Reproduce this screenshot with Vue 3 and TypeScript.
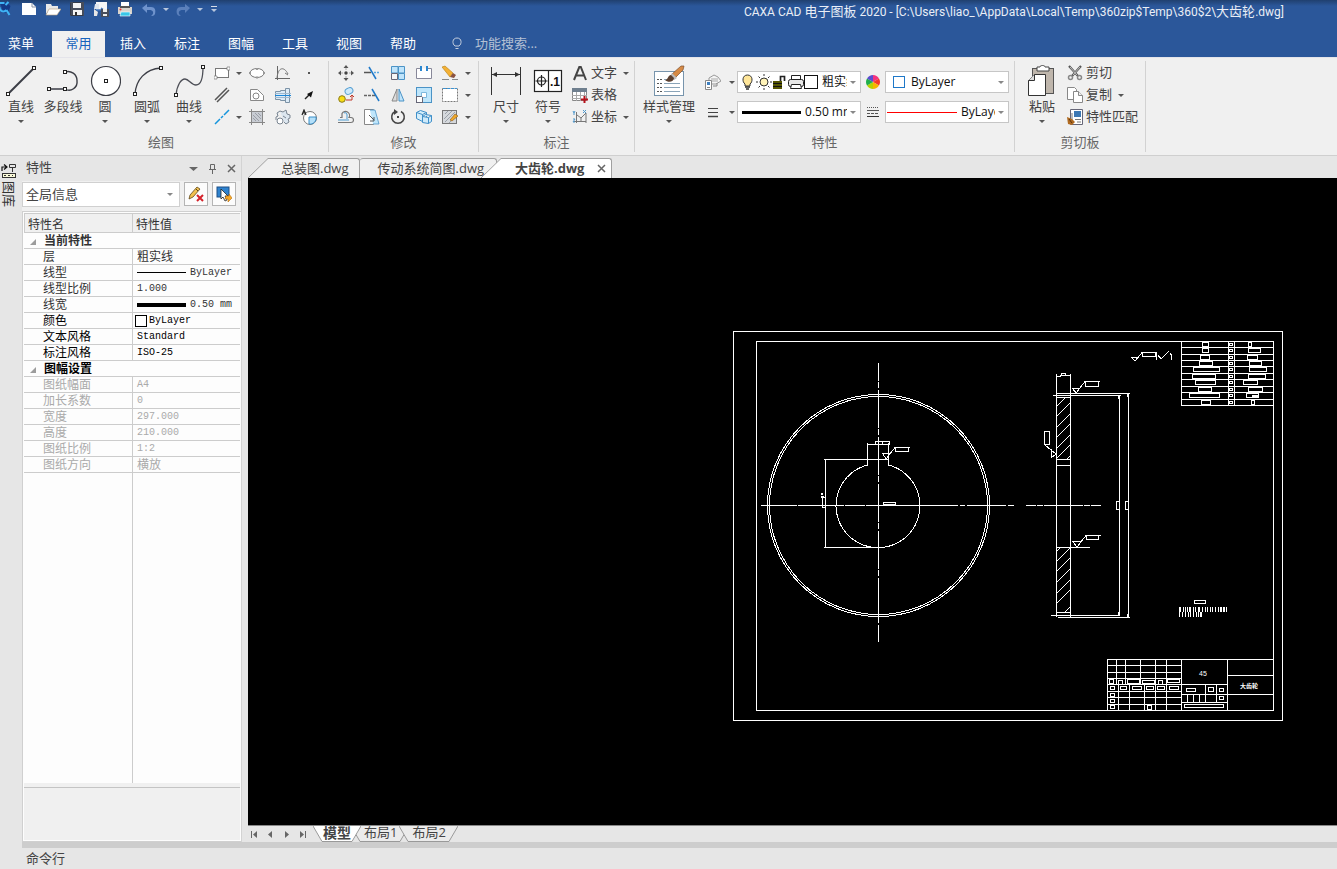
<script setup lang="ts">
import { ref } from 'vue'

type Tool = { icon: string; label: string; arrow?: boolean }

const quickTools: Tool[] = [
  { icon: 'new', label: '新建' },
  { icon: 'open', label: '打开' },
  { icon: 'save', label: '保存' },
  { icon: 'saveAs', label: '另存为' },
  { icon: 'print', label: '打印' },
  { icon: 'undo', label: '撤销', arrow: true },
  { icon: 'redo', label: '恢复', arrow: true },
]

const ribbonTabs = ['常用', '插入', '标注', '图幅', '工具', '视图', '帮助']
const activeTab = ref('常用')

const drawLarge: Tool[] = [
  { icon: 'line', label: '直线', arrow: true },
  { icon: 'polyline', label: '多段线' },
  { icon: 'circle', label: '圆', arrow: true },
  { icon: 'arc', label: '圆弧', arrow: true },
  { icon: 'curve', label: '曲线', arrow: true },
]

const drawSmall: Tool[][] = [
  [
    { icon: 'rect', label: '矩形', arrow: true },
    { icon: 'ellipse', label: '椭圆' },
    { icon: 'graph', label: '公式曲线' },
    { icon: 'dot', label: '点' },
  ],
  [
    { icon: 'parallel', label: '平行线' },
    { icon: 'hole', label: '孔' },
    { icon: 'shaft', label: '轴' },
    { icon: 'pointer', label: '箭头' },
  ],
  [
    { icon: 'centerline', label: '中心线', arrow: true },
    { icon: 'hatch', label: '剖面线' },
    { icon: 'gear', label: '齿形' },
    { icon: 'detail', label: '局部放大' },
  ],
]

const modifySmall: Tool[][] = [
  [
    { icon: 'move', label: '平移' },
    { icon: 'trim', label: '裁剪' },
    { icon: 'array', label: '阵列' },
    { icon: 'break', label: '打断' },
    { icon: 'erase', label: '删除', arrow: true },
  ],
  [
    { icon: 'copyMove', label: '平移复制' },
    { icon: 'extend', label: '延伸' },
    { icon: 'mirror', label: '镜像' },
    { icon: 'scale', label: '缩放' },
    { icon: 'select', label: '拉伸', arrow: true },
  ],
  [
    { icon: 'offset', label: '等距线' },
    { icon: 'chamfer', label: '过渡' },
    { icon: 'rotate', label: '旋转' },
    { icon: 'block', label: '分解' },
    { icon: 'editHatch', label: '编辑', arrow: true },
  ],
]

const noteLarge: Tool[] = [
  { icon: 'dimension', label: '尺寸', arrow: true },
  { icon: 'symbol', label: '符号', arrow: true },
]
const noteRows: Tool[] = [
  { icon: 'text', label: '文字', arrow: true },
  { icon: 'table', label: '表格' },
  { icon: 'coord', label: '坐标', arrow: true },
]
const clipRows: Tool[] = [
  { icon: 'cut', label: '剪切' },
  { icon: 'copy', label: '复制', arrow: true },
  { icon: 'match', label: '特性匹配' },
]

type Prop = { name: string; value: string; line?: 'thin' | 'thick'; swatch?: boolean; cjk?: boolean; tone?: 'strong' | 'muted' }
const currentProps: Prop[] = [
  { name: '层', value: '粗实线', cjk: true },
  { name: '线型', value: 'ByLayer', line: 'thin' },
  { name: '线型比例', value: '1.000' },
  { name: '线宽', value: '0.50 mm', line: 'thick' },
  { name: '颜色', value: 'ByLayer', swatch: true, tone: 'strong' },
  { name: '文本风格', value: 'Standard', tone: 'strong' },
  { name: '标注风格', value: 'ISO-25', tone: 'strong' },
]
const sheetProps: Prop[] = [
  { name: '图纸幅面', value: 'A4', tone: 'muted' },
  { name: '加长系数', value: '0', tone: 'muted' },
  { name: '宽度', value: '297.000', tone: 'muted' },
  { name: '高度', value: '210.000', tone: 'muted' },
  { name: '图纸比例', value: '1:2', tone: 'muted' },
  { name: '图纸方向', value: '横放', cjk: true, tone: 'muted' },
]

const layouts = ['模型', '布局1', '布局2']
const activeLayout = ref('模型')

const sq = (x: number, y: number) =>
  `<rect x="${x - 1.5}" y="${y - 1.5}" width="3" height="3" fill="#fff" stroke="#222"/>`

const icons: Record<string, string> = {
  new: '<path d="M1 2h10l4 4v8H1z" fill="#fff"/><path d="M11 2v4h4" fill="none" stroke="#8a93a5"/>',
  open: '<path d="M1 13V3h5l1 2h6v3H5z" fill="#e9e9e9"/><path d="M4 8h12l-4 6H1z" fill="#fff" stroke="#b9a07a" stroke-width=".6"/>',
  save: '<path d="M1.500 1.500h13v13h-13z" fill="#f4f4f4" stroke="#353b48"/><path d="M2 1v13h2V9h9v5h2V1h-3v6H4V1z" fill="#474d5b"/><path d="M6 11h2v4H6z" fill="#333"/>',
  saveAs: '<path d="M3 1h11v8H3z" fill="#f6f6f6"/><path d="M2 3l4 0v5H1z" fill="#dfe6ef"/><path d="M1 8l4 3-1 4H1z" fill="#e6e6e6"/><path d="M3 9h7M8 7l3 2-3 3" stroke="#3f74bd" fill="none" stroke-width="1.400"/><path d="M8 8h8v8H8z" fill="#474d5b"/><path d="M10 8h4v3h-4zM10 13h4v2h-4z" fill="#eee"/>',
  print: '<path d="M4 1h8v5H4z" fill="#fff"/><path d="M1 6h14v7H1z" fill="#d9d4cc"/><path d="M3 5h10v2H3z" fill="#555"/><path d="M4 11h9v4H3z" fill="#38c6e8" stroke="#fff" stroke-width=".6"/><circle cx="3.500" cy="8.500" r="1" fill="#e33"/>',
  undo: '<path d="M1 7l5-4v3h4c4 0 5 3 4 7-1 2-3 2-4 2 3-2 3-5-.5-6H6v3z" fill="#6f93cc"/>',
  redo: '<path d="M15 7l-5-4v3H6C2 6 1 9 2 13c1 2 3 2 4 2-3-2-3-5 .5-6H10v3z" fill="#5b80bb"/>',

  line: `<path d="M3 29L29 3" stroke="#3b3d45" stroke-width="2"/>${sq(3, 29)}${sq(29, 3)}`,
  polyline: `<path d="M2 24h16a8 8.500 0 0 0 12-8.500A9 9 0 0 0 18 7" fill="none" stroke="#3b3d45" stroke-width="1.400"/>${sq(2, 24)}${sq(18, 24)}${sq(18, 7)}`,
  circle: `<circle cx="17" cy="16" r="14.500" fill="#fff" stroke="#3b3d45" stroke-width="1.200"/>${sq(17, 16)}`,
  arc: `<path d="M4 29C5 15 14 4 30 3" fill="none" stroke="#3b3d45" stroke-width="1.300"/>${sq(4, 29)}${sq(30, 3)}`,
  curve: `<path d="M3 30C4 20 8 14 12 14s6 6 11 6c6 0 7-10 7-18" fill="none" stroke="#4c4e56" stroke-width="1.300"/>${sq(3, 30)}${sq(30, 2)}`,

  rect: '<rect x="1.500" y="3.500" width="13" height="9" fill="#fff" stroke="#777"/><path d="M0 11h3v3H0zM13 2h3v3h-3z" fill="#fff" stroke="#777" stroke-width=".7"/>',
  ellipse: '<ellipse cx="8" cy="8" rx="7" ry="4.500" fill="#fff" stroke="#777"/><path d="M7 3h2v2H7zM0 7h2v2H0zM14 7h2v2h-2zM7 11.500h2v2H7z" fill="#999"/>',
  graph: '<path d="M2.500 1v14M0 13.500h15" stroke="#666" fill="none"/><path d="M2 13C3 2 9 1 13 9M13 10l-3-2" stroke="#777" fill="none"/>',
  dot: '<path d="M7 7h2v2H7z" fill="#555"/>',
  parallel: '<path d="M1 13L13 1M3 15L15 3" stroke="#555" stroke-width="1.500"/>',
  hole: '<path d="M1.500 2.500h7l6 6v5h-13z" fill="#fff" stroke="#888"/><circle cx="7" cy="9" r="3" fill="#fff" stroke="#888"/>',
  shaft: '<path d="M.5 4.500h5v-1h5v10h-5v-1h-5z" fill="#dcebf7" stroke="#7d93a6"/><path d="M10.500 1.500h4v14h-4z" fill="#dcebf7" stroke="#7d93a6"/><path d="M0 6.500h16M0 10.500h16" stroke="#9fb9cf"/><path d="M0 8.500h16" stroke="#1b86d8"/>',
  pointer: '<path d="M4 12l4-4" stroke="#222" stroke-width="1.500"/><path d="M12 4L6 7l4 3.500z" fill="#111"/>',
  centerline: '<path d="M1 15L6 10M7 9l2-2M10 6l5-5" stroke="#1595dd" stroke-width="1.500"/>',
  hatch: '<rect x="2.500" y="2.500" width="11" height="11" fill="#c8ccd3" stroke="#777"/><path d="M2.500 0v16M0 2.500h16M13.500 0v16M0 13.500h16" stroke="#888"/><path d="M4 6l6 6M4 9l3 3M6 4l6 6M9 4l3 3" stroke="#9a9ea6"/>',
  gear: '<path d="M5 2l3 1 3-2 1 4 3 1v3l-2 1 1 3-3 2-2-2M1 8l2-1-1-3 3-2M1 8v3" fill="#dce6ef" stroke="#7a8591"/><circle cx="5" cy="12" r="3" fill="#fff" stroke="#7a8591"/><path d="M8 7l3 2" stroke="#7a8591"/>',
  detail: '<circle cx="9" cy="9" r="6.500" fill="#fff" stroke="#777"/><path d="M8 8h7a6 6 0 0 1-7 7z" fill="#b4e0fa" stroke="#3c8fc6"/><path d="M1 6l2-5 2 5M2 4h3" stroke="#222" fill="none" stroke-width="1.200"/>',

  move: '<path d="M8 0l2.500 3h-5zM8 16l2.500-3h-5zM0 8l3-2.500v5zM16 8l-3-2.500v5z" fill="#555"/><circle cx="8" cy="8" r="1.700" fill="#444"/><path d="M8 3v2M8 11v2M3 8h2M11 8h2" stroke="#aaa"/>',
  trim: '<path d="M0 7.500h7" stroke="#555" stroke-width="1.500"/><path d="M5 2l7 12" stroke="#1f79c9" stroke-width="1.500"/><path d="M10 7.500h6" stroke="#5aa7e0" stroke-width="1.500" stroke-dasharray="2 1"/>',
  array: '<path d="M1.500 1.500h6.500v6.500h-6.500zM8.500 1.500h6v6.500h-6zM8.500 8.500h6v6h-6z" fill="#bfe4fb" stroke="#4b93c6"/><path d="M1.500 8.500h6v6h-6z" fill="#f6f6f6" stroke="#667"/>',
  break: '<path d="M5 3.500H.5v10h15v-10H11" fill="#fff" stroke="#889"/><path d="M4 1h2v5H4zM10 1h2v5h-2z" fill="#2b86cf"/>',
  erase: '<path d="M0 2l3-1 8 7-3 4z" fill="#f4b134" stroke="#b67d12" stroke-width=".6"/><path d="M8 12l3-4 3 2-2 3z" fill="#8a5240"/><path d="M0 14.500h7M10 14.500h6" stroke="#888"/>',
  copyMove: '<rect x="7" y="1" width="8" height="6" rx="3" transform="rotate(-25 11 4)" fill="#cde9fb" stroke="#5aa2d4"/><circle cx="4" cy="12" r="3.300" fill="#f7dd14" stroke="#8a7b19"/><path d="M8 13h6v-4M12 10l2-2 2 2" stroke="#c0392b" fill="none"/>',
  extend: '<path d="M0 8.500h3M4 8.500h3M8 8.500h3" stroke="#666" stroke-width="1.500"/><path d="M8 2l7 12" stroke="#1f79c9" stroke-width="1.500"/>',
  mirror: '<path d="M7 2v12H2z" fill="#dcdcdc" stroke="#888"/><path d="M9 2v12h5z" fill="#bfe4fb" stroke="#4b93c6"/>',
  scale: '<rect x=".5" y=".5" width="15" height="15" fill="#bfe6fb" stroke="#4b93c6"/><rect x=".5" y="9.500" width="6" height="6" fill="#fff" stroke="#667"/><path d="M5.500 9v-3.500h5v5H7" fill="#fff" stroke="#7db8dd"/>',
  select: '<rect x=".5" y="1.500" width="15" height="13" fill="#fff" stroke="#777" stroke-dasharray="2 1"/><path d="M1 1.500h14" stroke="#3b93d3" stroke-dasharray="3 1"/>',
  offset: '<path d="M0 13.500h13a2 2 0 0 0 0-5h-2a4 4 0 0 0-7-4v4H2" fill="none" stroke="#777" stroke-width="1.200"/><path d="M0 11h11M6 4a2 2 0 0 1 3 2v4" stroke="#4b9bd2" fill="none"/>',
  chamfer: '<path d="M.5.500h9v15h-9z" fill="#fff" stroke="#888"/><path d="M6 1h5l4 14H9" fill="#bfe6fb" stroke="#4b93c6" stroke-width=".8"/><path d="M5 6l5 5M10 8v4H6" fill="none" stroke="#555"/>',
  rotate: '<path d="M11 2.500a6.300 6.300 0 1 1-6 0" fill="none" stroke="#444" stroke-width="1.500"/><path d="M4 0l4 3-4 3z" fill="#444"/><path d="M7 7h2v2H7z" fill="#444"/>',
  block: '<path d="M.5 3.500l4-2 6 2v7l-4 2-6-3zM10.500 3.500l-4 2v7M.5 3.500l6 2" fill="#d5eefb" stroke="#3f8fc9"/><path d="M6.500 7.500l3-2 6 1v6l-3 2-6-1zM12.500 8.500v6M6.500 7.500l6 1 3-2" fill="#cfeafa" stroke="#3f8fc9"/>',
  editHatch: '<rect x=".5" y="1.500" width="14" height="13" fill="#d5d8dc" stroke="#777"/><path d="M3 5l3-3M2 10l8-8M3 13L13 3M7 14l6-6" stroke="#9aa0a8"/><path d="M8 11l5-6 3 2-6 5z" fill="#f0a829" stroke="#8b5a17" stroke-width=".6"/>',

  dimension: '<path d="M1.500 2v28M30.500 2v28" stroke="#333"/><path d="M2 9.500h28" stroke="#333"/><path d="M2 9.500l5-2.500v5zM30 9.500l-5-2.500v5z" fill="#333"/>',
  symbol: '<rect x="2.500" y="5.500" width="27" height="21" fill="#fff" stroke="#222" stroke-width="1.200"/><path d="M16.500 5v22M9.500 10v12M3.500 16h12" stroke="#222" stroke-width="1.200"/><circle cx="9.500" cy="16" r="4" fill="none" stroke="#222" stroke-width="1.200"/><text x="18" y="21" font-size="12" font-weight="700" font-family="Liberation Sans, sans-serif" fill="#111">.1</text>',
  style: '<rect x="1.500" y="6.500" width="29" height="24" fill="#fff" stroke="#7794ac"/><path d="M4 14.500h5M4 18.500h5M4 22.500h5M4 26.500h5" stroke="#555" stroke-dasharray="2 1"/><path d="M11 14.500h6M11 18.500h16M11 22.500h16M11 26.500h16" stroke="#8aa4b8"/><path d="M19 9L28 1h3l-1 4-8 8z" fill="#d68a45" stroke="#7d5130" stroke-width=".7"/><path d="M19 8l5 5-3 2-4-4z" fill="#bbb"/><path d="M12 15c3 0 3-5 6-5l3 3c0 4-6 5-9 2z" fill="#5b4030"/>',
  paste: '<rect x="6.500" y="3.500" width="21" height="25" fill="#bfb6ac" stroke="#555"/><path d="M11 6V2h3c0-2 5-2 5 0h4v4z" fill="#fff" stroke="#444"/><path d="M8.500 9.500h11v21h-17v-15z" fill="#fff" stroke="#333"/><path d="M8.500 9.500v6h-6" fill="#ddd" stroke="#333"/>',

  text: '<path d="M2 15L7.300 2h1.500L14 15M4 10.500h8" fill="none" stroke="#444" stroke-width="2"/>',
  table: '<path d="M.5 1.500h14v12H.5z" fill="#fff" stroke="#888"/><path d="M0 1h15v4H0z" fill="#6f7f8e"/><path d="M0 8.500h15M0 11.500h9M4.500 5v9M8.500 5v9M12.500 5v4" stroke="#aaa"/><path d="M12.500 9v7M9 12.500h7" stroke="#b5121b" stroke-width="2"/>',
  coord: '<path d="M4.500 3v11M2 12.500h12M5 6l4 3 5-5M9 9v3M14 4v10" stroke="#777" fill="none"/><path d="M1 2l1 2 1-2M2 4v2M11 1l3 3M14 1l-3 3M1 10h2l-2 3h2" stroke="#4d97cc" fill="none"/>',
  cut: '<path d="M2 1l9 10M14 1L5 11" stroke="#555" stroke-width="2.200"/><path d="M3 2l7 8M13 2l-7 8" stroke="#ddd" stroke-width=".8"/><circle cx="3.500" cy="12.500" r="2" fill="none" stroke="#888" stroke-width="1.500"/><circle cx="12.500" cy="12.500" r="2" fill="none" stroke="#888" stroke-width="1.500"/>',
  copy: '<path d="M.5.500h7l2 2v10h-9z" fill="#fff" stroke="#888"/><path d="M6.500 4.500h5l4 4v7h-9z" fill="#fff" stroke="#888"/><path d="M11.500 4.500v4h4" fill="#eee" stroke="#888"/>',
  match: '<path d="M3.500.500h12v15h-12z" fill="#fff" stroke="#667"/><path d="M7 2h7v6H7z" fill="#3c78b4"/><path d="M5 4v8M8 10.500h6M10 13h4" stroke="#777"/><path d="M0 8l5 2 3 3-3 3-4-1z" fill="#b06a20"/><path d="M2 10l3 4" stroke="#5a3310"/>',

  layerTool: '<path d="M4 4l5-3 4 2 3 4-5 3H4z" fill="#f4f4f4" stroke="#999"/><path d="M6 5h7M5 7h8" stroke="#aaa"/><path d="M.5 6.500h6v9h-6z" fill="#fff" stroke="#888"/><rect x="2" y="8" width="3" height="3" fill="#3f80c0"/><path d="M2 13.500h3M8 12h4V9" stroke="#888" fill="none"/>',
  weight: '<path d="M3 4.500h10M3 8.500h10" stroke="#444"/><path d="M3 12.500h10" stroke="#444" stroke-width="1.500"/>',
  bulb: '<path d="M5 10C2 8 2 1 7.500 1S13 8 10 10v2H5z" fill="#ffe699" stroke="#333"/><path d="M5 13h5M6 15h3" stroke="#333" stroke-width="1.500"/>',
  sun: '<circle cx="8" cy="8" r="4" fill="#fff3b8" stroke="#333"/><path d="M8 0v2M8 14v2M0 8h2M14 8h2M2.500 2.500l1.500 1.500M12 12l1.500 1.500M13.500 2.500L12 4M4 12l-1.500 1.500" stroke="#333"/>',
  lock: '<path d="M1 7h9v8H1z" fill="#565600"/><path d="M1 9.500h9M1 12.500h9" stroke="#111"/><path d="M8.500 7V2.500h4V7" stroke="#222" fill="none" stroke-width="1.700"/>',
  plot: '<path d="M3.500 5V1.500h9V5" fill="#fff" stroke="#222"/><rect x=".5" y="5.500" width="15" height="7" rx="2" fill="#e8e8e8" stroke="#222"/><path d="M3.500 10.500h9l1 4h-11z" fill="#fff" stroke="#222"/>',
  wheel: '<path d="M8 8V1a7 7 0 0 1 6 3.500z" fill="#f5347f"/><path d="M8 8l6-3.500a7 7 0 0 1 0 7z" fill="#f33a2c"/><path d="M8 8l6 3.500A7 7 0 0 1 8 15z" fill="#f7b500"/><path d="M8 8v7a7 7 0 0 1-6-3.500z" fill="#b7d300"/><path d="M8 8l-6 3.500a7 7 0 0 1 0-7z" fill="#1fae4b"/><path d="M8 8L2 4.500A7 7 0 0 1 8 1z" fill="#5b4fd0"/>',
  linetype: '<path d="M2 3.500h12" stroke="#555" stroke-dasharray="1 1"/><path d="M2 6.500h12" stroke="#555"/><path d="M2 9.500h12" stroke="#555" stroke-dasharray="3 1"/><path d="M2 12.500h12" stroke="#333"/>',

  pick: '<path d="M1 13l1-4 7-8 3 2-7 8z" fill="#f2c14e" stroke="#5f471a" stroke-width=".8"/><path d="M8 3l2 2" stroke="#5f471a"/><path d="M9 9l6 6M15 9l-6 6" stroke="#d5222b" stroke-width="2"/>',
  choose: '<rect x="1" y="1" width="12" height="10" fill="#2f83cf" stroke="#1c4f86"/><path d="M5 3v10l2-2 2 4 2-1-2-4h3z" fill="#fff" stroke="#222" stroke-width=".8"/><path d="M10 10h3V8l3 4-4 4v-3h-3z" fill="#f7a928" stroke="#b56c0b" stroke-width=".6"/>',
  library: '<path d="M2 9V5h5M4 2.500L7 5 4 7.500" stroke="#111" fill="none" stroke-width="1.200"/><path d="M9.500 2.500h6v3h-6zM12.500 6v4" stroke="#333" fill="none"/><rect x="2.500" y="11.500" width="13" height="4" fill="#fafad8" stroke="#333"/><path d="M4 13.500h2M8 13.500h2M12 13.500h1" stroke="#333"/>',
}

/* Parts list: [x, width] of the outlines in each row */
const rowTops = [341, 347, 354, 360, 366, 373, 379, 386, 392, 399, 405]
const nameBoxes = [[1202, 6], [1202, 6], [1200, 9], [1199, 13], [1193, 26], [1192, 23], [1195, 20], [1198, 13], [1189, 30], [1201, 9]]
const valueBoxes = [[1248, 3], [1248, 12], [1247, 10], [1249, 12], [1249, 17], [1248, 17], [1243, 14], [1248, 14], [1246, 12], [1251, 3]]
const hatches = [416, 427, 437, 448, 458, 561, 571, 582, 593, 603]
const titleBoxes = [
  [1109, 679, 4, 4], [1118, 680, 4, 4], [1127, 679, 12, 4], [1142, 680, 12, 3], [1158, 680, 4, 4], [1167, 679, 12, 3],
  [1110, 686, 4, 3], [1120, 686, 6, 3], [1132, 686, 9, 3], [1146, 686, 7, 3], [1157, 686, 7, 3], [1169, 686, 9, 3],
  [1110, 693, 4, 3], [1110, 699, 4, 3], [1110, 705, 4, 3], [1147, 705, 4, 4],
  [1186, 688, 9, 3], [1208, 687, 5, 4], [1219, 688, 4, 3], [1219, 696, 4, 3], [1184, 704, 39, 3],
]
const noteTicks = [1179, 1180, 1183, 1185, 1187, 1189, 1190, 1193, 1195, 1198, 1199, 1202, 1205, 1207, 1210, 1212, 1215, 1218, 1220, 1221, 1223, 1224, 1226]
const noteTicks2 = [1179, 1182, 1185, 1188, 1190, 1193, 1196, 1198, 1200, 1201]
</script>

<template>
  <div class="app">
    <header class="title-bar">
      <div class="quick">
        <svg class="logo" width="16" height="18" viewBox="0 0 16 18">
          <path d="M3 4l5-2 5 4-2 6-5 1z" fill="#143a86" />
          <path d="M0 3h7M2 7a4 4 0 0 0 7 3M8 5l3-3M9 10l3 5" stroke="#3fb4f5" stroke-width="2" fill="none" />
        </svg>
        <template v-for="t in quickTools" :key="t.icon">
          <button class="quick-btn" :aria-label="t.label"><svg width="16" height="16" viewBox="0 0 16 16" v-html="icons[t.icon]" /></button>
          <button v-if="t.arrow" class="quick-arrow" :aria-label="t.label + '列表'"><i class="caret" /></button>
        </template>
        <button class="quick-btn custom" aria-label="自定义"><i class="bar" /><i class="caret" /></button>
      </div>
      <h1 class="title">CAXA CAD <span>电子图板</span> 2020 - [C:\Users\liao_\AppData\Local\Temp\360zip$Temp\360$2\<span>大齿轮</span>.dwg]</h1>
    </header>

    <nav class="tabs">
      <button class="menu-btn">菜单</button>
      <button v-for="t in ribbonTabs" :key="t" class="tab" :class="{ active: t === activeTab }" @click="activeTab = t">{{ t }}</button>
      <label class="search">
        <svg width="12" height="14" viewBox="0 0 12 14"><path d="M4 10C1 8 1 2 6 2s5 6 2 8zM4.500 12.500h3" fill="none" stroke="#c5cfdf" /></svg>
        <input type="text" placeholder="功能搜索..." aria-label="功能搜索" />
      </label>
    </nav>

    <div class="ribbon">
      <section class="group draw">
        <div class="tools">
          <button v-for="t in drawLarge" :key="t.icon" class="large">
            <svg width="32" height="32" viewBox="0 0 32 32" v-html="icons[t.icon]" />
            <span>{{ t.label }}</span><i v-if="t.arrow" class="caret" />
          </button>
          <div class="small-rows">
            <div v-for="(row, i) in drawSmall" :key="i" class="small-row draw-row">
              <template v-for="t in row" :key="t.icon">
                <button class="small" :aria-label="t.label"><svg width="16" height="16" viewBox="0 0 16 16" v-html="icons[t.icon]" /></button>
                <button v-if="t.arrow" class="drop" :aria-label="t.label + '列表'"><i class="caret" /></button>
                <span v-else-if="t === row[0]" />
              </template>
            </div>
          </div>
        </div>
        <h2>绘图</h2>
      </section>

      <section class="group modify">
        <div class="tools">
          <div class="small-rows">
            <div v-for="(row, i) in modifySmall" :key="i" class="small-row modify-row">
              <template v-for="t in row" :key="t.icon">
                <button class="small" :aria-label="t.label"><svg width="16" height="16" viewBox="0 0 16 16" v-html="icons[t.icon]" /></button>
                <button v-if="t.arrow" class="drop" :aria-label="t.label + '列表'"><i class="caret" /></button>
              </template>
            </div>
          </div>
        </div>
        <h2>修改</h2>
      </section>

      <section class="group note">
        <div class="tools">
          <button v-for="t in noteLarge" :key="t.icon" class="large">
            <svg width="32" height="32" viewBox="0 0 32 32" v-html="icons[t.icon]" />
            <span>{{ t.label }}</span><i class="caret" />
          </button>
          <div class="labelled">
            <button v-for="t in noteRows" :key="t.icon" class="labelled-btn">
              <svg width="16" height="16" viewBox="0 0 16 16" v-html="icons[t.icon]" />
              <span>{{ t.label }}</span><i v-if="t.arrow" class="caret" />
            </button>
          </div>
        </div>
        <h2>标注</h2>
      </section>

      <section class="group props">
        <div class="tools">
          <button class="large wide">
            <svg width="32" height="32" viewBox="0 0 32 32" v-html="icons.style" />
            <span>样式管理</span><i class="caret" />
          </button>
          <div class="prop-grid">
            <button class="small" aria-label="图层工具"><svg width="16" height="16" viewBox="0 0 16 16" v-html="icons.layerTool" /></button>
            <button class="drop" aria-label="图层列表"><i class="caret" /></button>
            <div class="combo">
              <svg v-for="n in ['bulb', 'sun', 'lock', 'plot']" :key="n" width="16" height="16" viewBox="0 0 16 16" v-html="icons[n]" />
              <i class="swatch black" />
              <select aria-label="图层"><option>粗实线</option></select>
              <i class="caret" />
            </div>
            <button class="small" aria-label="颜色"><svg width="16" height="16" viewBox="0 0 16 16" v-html="icons.wheel" /></button>
            <div class="combo color">
              <i class="swatch blue" />
              <select aria-label="颜色选择"><option>ByLayer</option></select>
              <i class="caret" />
            </div>
            <button class="small" aria-label="线宽"><svg width="16" height="16" viewBox="0 0 16 16" v-html="icons.weight" /></button>
            <button class="drop" aria-label="线宽列表"><i class="caret" /></button>
            <div class="combo">
              <i class="sample thick" />
              <select aria-label="线宽选择"><option>0.50 mm</option></select>
              <i class="caret" />
            </div>
            <button class="small" aria-label="线型"><svg width="16" height="16" viewBox="0 0 16 16" v-html="icons.linetype" /></button>
            <div class="combo linetype">
              <i class="sample red" />
              <select aria-label="线型选择"><option>ByLayer</option></select>
              <i class="caret" />
            </div>
          </div>
        </div>
        <h2>特性</h2>
      </section>

      <section class="group clip">
        <div class="tools">
          <button class="large">
            <svg width="32" height="32" viewBox="0 0 32 32" v-html="icons.paste" />
            <span>粘贴</span><i class="caret" />
          </button>
          <div class="labelled">
            <button v-for="t in clipRows" :key="t.icon" class="labelled-btn">
              <svg width="16" height="16" viewBox="0 0 16 16" v-html="icons[t.icon]" />
              <span>{{ t.label }}</span><i v-if="t.arrow" class="caret" />
            </button>
          </div>
        </div>
        <h2>剪切板</h2>
      </section>
    </div>

    <div class="body">
      <aside class="dock">
        <button class="dock-btn">
          <svg width="17" height="17" viewBox="0 0 17 17" v-html="icons.library" />
          <span>图库</span>
        </button>
      </aside>

      <div class="work">
        <div class="panes">
          <aside class="panel">
            <header class="panel-head">
              <h2>特性</h2>
              <button aria-label="菜单"><svg width="11" height="11" viewBox="0 0 11 11"><path d="M1 4h9l-4.500 4z" fill="#666" /></svg></button>
              <button aria-label="固定"><svg width="11" height="11" viewBox="0 0 11 11"><path d="M3.500 6V1.500h4V6M2 6.500h7M5.500 7v4" fill="none" stroke="#666" /></svg></button>
              <button aria-label="关闭"><svg width="11" height="11" viewBox="0 0 11 11"><path d="M2 2l7 7M9 2l-7 7" stroke="#666" stroke-width="1.500" /></svg></button>
            </header>
            <div class="panel-pick">
              <div class="combo scope">
                <select aria-label="选择范围"><option>全局信息</option></select>
                <i class="caret" />
              </div>
              <button class="boxed" aria-label="清除选择"><svg width="16" height="16" viewBox="0 0 16 16" v-html="icons.pick" /></button>
              <button class="boxed" aria-label="快速选择"><svg width="16" height="16" viewBox="0 0 16 16" v-html="icons.choose" /></button>
            </div>
            <div class="sheet">
              <table>
                <colgroup><col class="c1" /><col class="c2" /></colgroup>
                <thead><tr><th>特性名</th><th>特性值</th></tr></thead>
                <tbody v-for="(list, g) in [currentProps, sheetProps]" :key="g">
                  <tr class="section" :class="{ strong: g === 1 }">
                    <th colspan="2"><svg width="6" height="6" viewBox="0 0 6 6"><path d="M6 0v6H0z" fill="#9c9c9c" /></svg>{{ g === 0 ? '当前特性' : '图幅设置' }}</th>
                  </tr>
                  <tr v-for="p in list" :key="p.name" :class="p.tone">
                    <td class="name">{{ p.name }}</td>
                    <td class="value" :class="{ cjk: p.cjk }">
                      <div><i v-if="p.line" :class="['rule', p.line]" /><i v-if="p.swatch" class="chip" />{{ p.value }}</div>
                    </td>
                  </tr>
                </tbody>
              </table>
              <div class="rest"><i /></div>
              <div class="hint" />
            </div>
          </aside>

          <main class="docs">
            <div class="doc-tabs">
              <button class="doc">
                <svg width="21" height="20" viewBox="0 0 21 20"><path d="M0 20L20 .5h1V20z" fill="#f0f0f0" /><path d="M0 20L20 .5h1" fill="none" stroke="#a0a0a0" /></svg>
                <span>总装图.dwg</span>
              </button>
              <button class="doc second"><span>传动系统简图.dwg</span></button>
              <div class="doc current">
                <svg width="21" height="20" viewBox="0 0 21 20"><path d="M0 20L20 .5h1V20z" fill="#fff" /><path d="M0 20L20 .5h1" fill="none" stroke="#a0a0a0" /></svg>
                <span><b>大齿轮.dwg</b><button aria-label="关闭文档"><svg width="9" height="9" viewBox="0 0 9 9"><path d="M1 1l7 7M8 1L1 8" stroke="#666" stroke-width="1.500" /></svg></button></span>
              </div>
            </div>

            <div class="canvas">
              <svg viewBox="248 178 1089 647" fill="none" stroke="#fff" shape-rendering="crispEdges">
                <rect x="733.5" y="331.5" width="549" height="389" />
                <rect x="756.5" y="341.5" width="517" height="369" />
                <!-- Front view -->
                <circle cx="878.5" cy="505.5" r="111" />
                <circle cx="878.5" cy="505.5" r="109" />
                <path d="M867.5 443V465A42 42 0 1 0 888.5 465V443M868 444.5h20" />
                <path d="M878.5 363V642" stroke-dasharray="38 1 6 2" stroke-dashoffset="20" />
                <path d="M761 505.500H797M798 505.500H844M845 505.500H865M866 505.500H958M960 505.500H965M967 505.500H1006M1008 505.500H1014" />
                <path d="M824 459.500H888M824 547.500H879M825.500 459V548" />
                <rect x="822.5" y="497.5" width="3" height="10" />
                <path d="M821 493.500h2M821 496.500h3" stroke-width="2" />
                <rect x="875.5" y="441.5" width="7" height="3" /><rect x="882.5" y="441.500" width="7" height="3" />
                <rect x="883.5" y="502.500" width="12" height="2" />
                <path d="M882 453.500h9M883 454l3 5 9-11.500H910" /><rect x="895.5" y="447.500" width="13" height="4" />
                <!-- Side view -->
                <path d="M1056.500 374V617M1070.500 374V617M1119.500 395V615M1128.500 393V617" />
                <path d="M1057 376.500h3v-1h10M1057 393.500h73M1053 395.500h68M1056 397.500h14M1056 459.500h14M1056 465.500h14" />
                <path d="M1056 547.500h34M1056 612.500h14M1051 615.500h69M1058 617.500h72M1118.500 396v3M1127.500 394v3M1118.500 612v3M1127.500 614v3" />
                <rect x="1061.500" y="373.500" width="4" height="2" />
                <path v-for="y in hatches" :key="y" :d="`M1057 ${y}l13-13`" />
                <path d="M1057 406l8-8M1067 459l3-3M1057 551l3-3M1065 612l5-5" />
                <path d="M1026 505.500h10M1037 505.500h6M1044 505.500h39M1084 505.500h6M1091 505.500h10" />
                <rect x="1116.500" y="501.500" width="3" height="8" /><rect x="1125.500" y="501.500" width="3" height="8" />
                <path d="M1072 388.500h8M1073 389l3 4 9-11.500h15" /><rect x="1085.500" y="381.500" width="13" height="5" />
                <path d="M1072 541.500h10M1073 542l4 5 9-11.500h15" /><rect x="1086.500" y="535.500" width="12" height="4" />
                <rect x="1044.500" y="431.500" width="5" height="13" /><path d="M1045 445l11 9-5 4v-9" />
                <path d="M1131 357.500h8M1132 358l3 3 7-8.500h14v5l1 2M1158 355l3 4 8-8M1170 353l2 3-1 4" /><rect x="1142.500" y="352.500" width="13" height="4" />
                <!-- Parameter table -->
                <path d="M1181.500 341v65M1228.500 341v65M1234.500 341v65" />
                <path v-for="y in rowTops" :key="'r' + y" :d="`M1181 ${y + 0.5}H1274`" />
                <template v-for="(b, i) in nameBoxes" :key="'n' + i">
                  <rect :x="b[0] + 0.5" :y="rowTops[i] + 1.5" :width="b[1]" height="4" />
                  <rect x="1229.500" :y="rowTops[i] + 2.5" width="3" height="2" />
                  <rect :x="valueBoxes[i][0] + 0.5" :y="rowTops[i] + 1.5" :width="valueBoxes[i][1]" height="4" />
                </template>
                <path d="M1252 396h6" stroke-width="3" />
                <!-- Title block -->
                <path d="M1107 659.500H1273M1107.500 659V711M1181.500 659V711M1227.500 659V711" />
                <path d="M1107 665.500h74M1107 672.500h74M1107 678.500h74M1107 684.500h120M1107 691.500h74M1107 697.500h74M1107 704.500h74" />
                <path d="M1116.500 659v25M1125.500 659v25M1140.500 659v25M1155.500 659v51M1166.500 659v51M1118.500 685v25M1129.500 685v25M1144.500 685v25" />
                <path d="M1181 694.500h92M1181 702.500h46M1227 675.500h46M1205.500 685v17M1216.500 685v17M1187.500 695v7M1193.500 695v7M1199.500 695v7" />
                <rect v-for="(b, i) in titleBoxes" :key="'t' + i" :x="b[0] + 0.5" :y="b[1] + 0.5" :width="b[2]" :height="b[3]" />
                <text x="1203" y="676" class="cad-text">45</text>
                <text x="1249" y="688" class="cad-text bold">大齿轮</text>
                <!-- Technical notes -->
                <rect x="1194.500" y="600.500" width="11" height="3" />
                <path v-for="x in noteTicks" :key="'a' + x" :d="`M${x + 0.5} 607v5`" />
                <path v-for="x in noteTicks2" :key="'b' + x" :d="`M${x + 0.5} 612v5`" />
              </svg>
            </div>

            <div class="layout-bar">
              <button class="nav" aria-label="第一个"><svg width="7" height="7" viewBox="0 0 7 7"><path d="M.5 0v7" stroke="#666" /><path d="M6 0v7L2 3.500z" fill="#666" /></svg></button>
              <button class="nav" aria-label="上一个"><svg width="7" height="7" viewBox="0 0 7 7"><path d="M5 0v7L1 3.500z" fill="#666" /></svg></button>
              <button class="nav" aria-label="下一个"><svg width="7" height="7" viewBox="0 0 7 7"><path d="M2 0v7l4-3.500z" fill="#666" /></svg></button>
              <button class="nav" aria-label="最后一个"><svg width="7" height="7" viewBox="0 0 7 7"><path d="M1 0v7l4-3.500z" fill="#666" /><path d="M6.500 0v7" stroke="#666" /></svg></button>
              <button v-for="l in layouts" :key="l" class="layout" :class="{ active: l === activeLayout }" @click="activeLayout = l">
                <svg class="edge" width="9" height="16" viewBox="0 0 9 16"><path d="M0 0h9v16z" class="fill" /><path d="M0 0l9 15.500" stroke="#999" /></svg>
                <span>{{ l }}</span>
                <svg class="edge" width="9" height="16" viewBox="0 0 9 16"><path d="M0 0h9L0 16z" class="fill" /><path d="M9 0L0 15.500" stroke="#999" /></svg>
              </button>
            </div>
          </main>
        </div>
        <div class="splitter" />
        <footer class="command">命令行</footer>
      </div>
    </div>
  </div>
</template>

<style>
html, body { margin: 0; }
</style>

<style scoped>
* { box-sizing: border-box; }
.app {
  min-height: 100vh;
  display: flex;
  flex-direction: column;
  background: #e6e6e6;
  color: #444;
  font: 13px/16px "Open Sans", "Noto Sans CJK SC", sans-serif;
}
button { border: 0; padding: 0; margin: 0; background: none; color: inherit; font: inherit; display: flex; align-items: center; justify-content: center; }
h1, h2 { margin: 0; font-weight: 400; font-size: 13px; }
i { display: block; flex: none; }
svg { display: block; flex: none; }
.caret { width: 0; height: 0; border: 3px solid transparent; border-top-color: #555; border-bottom: 0; }

.title-bar { height: 31px; display: flex; justify-content: space-between; background: linear-gradient(#20406f, #2b579a 6px); color: #e9eef6; }
.quick { display: flex; height: 18px; }
.logo { width: 17px; margin-left: -3px; margin-right: 3px; }
.quick-btn { width: 24px; }
.quick-arrow { width: 10px; }
.quick .caret { border-top-color: #b9c7dd; }
.custom { flex-direction: column; gap: 2px; width: 18px; }
.custom .bar { width: 6px; height: 1px; background: #d5dce8; }
.title { font: 12px/24px Roboto, "Noto Sans CJK SC", sans-serif; margin-right: 53px; white-space: nowrap; }
.title span { font-size: 13px; }

.tabs { height: 26px; display: flex; background: #2b579a; color: #fff; }
.menu-btn { width: 52px; padding: 0 0 2px 8px; justify-content: flex-start; }
.tab { width: 54px; padding-bottom: 2px; }
.tab.active { width: 53px; margin-right: 1px; background: #f0f0f0; color: #1763bd; }
.search { display: flex; align-items: center; gap: 12px; margin-left: 21px; padding-bottom: 2px; }
.search input { width: 120px; border: 0; padding: 0; background: none; color: #fff; font: inherit; outline: 0; }
.search input::placeholder { color: #b4c0d4; opacity: 1; }

.ribbon { height: 99px; display: flex; padding: 3px 0; background: #f0f0f0; border-top: 1px solid #e4e4ea; border-bottom: 1px solid #cfcfcf; }
.group { display: flex; flex-direction: column; justify-content: space-between; border-right: 1px solid #d2d2d2; color: #444; }
.group h2 { text-align: center; line-height: 20px; color: #666; }
.group.draw h2 { padding-right: 6px; }
.tools { display: flex; padding-top: 1px; }
.large { width: 42px; height: 66px; flex-direction: column; justify-content: flex-start; white-space: nowrap; padding-top: 3px; }
.large span { line-height: 18px; }
.large .caret { margin-top: 5px; }
.draw .tools { padding-right: 6px; }
.small-rows { display: flex; flex-direction: column; }
.small-row { display: grid; height: 22px; }
.draw-row { grid-template-columns: 24px 10px 26px 26px 26px; }
.modify .tools { padding: 1px 6px 0 4px; }
.modify-row { grid-template-columns: repeat(5, 26px) 9px; }
.note .tools { padding-left: 6px; padding-right: 5px; }
.labelled { display: flex; flex-direction: column; }
.labelled-btn { height: 22px; justify-content: flex-start; gap: 3px; white-space: nowrap; padding-left: 3px; }
.labelled-btn span { line-height: 16px; padding-bottom: 2px; }
.labelled-btn .caret { margin-left: 3px; }
.props .tools { padding: 1px 5px 0 5px; }
.wide { width: 58px; }
.prop-grid { display: grid; grid-template-columns: 29px 10px 124px 24px 124px; grid-auto-rows: 30px; align-items: center; margin-top: 5px; }
.clip .tools { padding: 1px 7px 0 2px; }
.clip .large { width: 50px; }
.clip .labelled-btn { padding-left: 0; }
.combo { display: flex; align-items: center; height: 22px; min-width: 0; border: 1px solid #c6c6c6; background: #fff; padding: 0 4px 0 2px; color: #111; }
.combo select { appearance: none; border: 0; padding: 0; margin: 0 3px 0 4px; flex: 1; min-width: 0; width: 0; background: none; color: inherit; font: inherit; font-size: 12px; outline: 0; overflow: hidden; text-overflow: clip; }
.combo .caret { border-top-color: #888; }
.swatch { width: 14px; height: 14px; border: 1px solid #111; background: #fff; }
.swatch.blue { border-color: #1f78c8; margin: 0 2px 0 5px; width: 12px; height: 12px; }
.sample.thick { width: 59px; height: 3px; background: #000; margin-left: 2px; }
.sample.red { width: 70px; height: 1px; background: #f00; }
.combo.linetype { padding-left: 1px; }

.body { flex: 1; display: flex; min-height: 0; }
.dock { width: 22px; padding: 6px 0 0 0; }
.dock-btn { flex-direction: column; gap: 2px; }
.dock-btn span { writing-mode: vertical-rl; text-orientation: sideways; line-height: 16px; color: #333; }
.work { flex: 1; min-width: 0; display: flex; flex-direction: column; }
.panes { flex: 1; display: flex; min-height: 0; }
.splitter { height: 6px; background: #cdcdcd; }
.command { height: 21px; line-height: 20px; padding-left: 4px; }

.panel { width: 220px; margin-right: 6px; display: flex; flex-direction: column; background: #f0f0f0; border-right: 1px solid #d3d3d3; }
.panel-head { height: 25px; display: flex; align-items: center; gap: 8px; padding: 0 4px; background: #e6e6e6; }
.panel-head h2 { flex: 1; padding-bottom: 3px; }
.panel-pick { display: flex; gap: 4px; height: 30px; padding: 1px 5px 0 0; }
.panel-pick .combo { flex: 1; height: 25px; padding: 0 6px 0 0; color: #444; border-color: #d0d0d0; }
.panel-pick .combo select { font-size: 13px; margin-left: 3px; padding-bottom: 2px; }
.boxed { width: 24px; height: 24px; border: 1px solid #b5b5b5; background: #fcfcfc; }
.sheet { flex: 1; display: flex; flex-direction: column; padding: 1px; border: 1px solid #d0d0d0; border-right: 0; background: #fdfdfd; }
table { border-collapse: separate; border-spacing: 0; table-layout: fixed; width: 100%; font: 12px/11px "Noto Sans CJK SC", sans-serif; color: #333; }
.c1 { width: 109px; }
th, td { vertical-align: top; }
thead th { height: 20px; padding: 4px 0 0 3px; text-align: left; font-weight: 400; background: #f0f0f0; border: 1px solid #ccc; }
thead th + th { border-width: 1px 0; }
tbody th, td { height: 16px; border-bottom: 1px solid #ccc; }
tbody th { padding: 1px 0 0 6px; text-align: left; }
tbody th svg { display: inline-block; margin-right: 8px; }
td.name { padding: 1px 0 0 19px; border-right: 1px solid #ccc; }
td.value { padding: 0 0 0 4px; font: 10px/15px "Liberation Mono", monospace; }
td.value.cjk { padding-top: 1px; font: 12px/11px "Noto Sans CJK SC", sans-serif; }
td.value div { display: flex; align-items: center; height: 15px; white-space: pre; }
td.value.cjk div { height: 11px; }
.strong { color: #000; }
.muted { color: #aaa; }
.rule { width: 49px; margin: 0 4px 0 0; background: #000; height: 1px; }
.rule.thick { height: 4px; }
.chip { width: 12px; height: 12px; border: 1px solid #000; background: #fff; margin: 0 2px 0 -2px; }
.rest { flex: 1; display: flex; border-bottom: 4px solid #f0f0f0; }
.rest i { width: 109px; border-right: 1px solid #ccc; }
.hint { height: 53px; background: #f0f0f0; border-top: 1px solid #c4c4c4; }

.docs { flex: 1; min-width: 0; display: flex; flex-direction: column; }
.doc-tabs { height: 22px; display: flex; align-items: flex-end; }
.doc { display: flex; height: 20px; white-space: nowrap; }
.doc > span { display: flex; align-items: center; height: 20px; padding: 0 10px 2px 12px; border: 1px solid #a0a0a0; border-width: 1px 1px 0 0; background: #f0f0f0; border-radius: 0 3px 0 0; }
.doc.second > span { padding: 0 12px 2px 18px; border-radius: 3px 3px 0 0; }
.doc.current { margin-left: -16px; z-index: 1; }
.doc.current > span { background: #fff; padding: 0 5px 0 13px; gap: 13px; }
.doc.current b { padding-bottom: 2px; }
.canvas { flex: 1; min-height: 0; position: relative; background: #000; }
.canvas > svg { position: absolute; inset: 0; width: 100%; height: 100%; }
.cad-text { font: 7px "Liberation Sans", "Noto Sans CJK SC", sans-serif; fill: #fff; stroke: none; text-anchor: middle; }
.cad-text.bold { font-size: 6px; font-weight: 700; }

.layout-bar { height: 17px; display: flex; border-top: 1px solid #888; }
.nav { width: 16px; padding-right: 4px; }
.layout { height: 16px; margin-right: -10px; position: relative; }
.nav + .layout { margin-left: 1px; }
.layout .fill { fill: #ebebeb; }
.layout span { height: 16px; line-height: 13px; background: #ebebeb; border-bottom: 1px solid #999; padding: 0 3px 0 4px; }
.layout.active { z-index: 1; font-weight: 700; font-size: 14px; }
.layout.active span { background: #fff; padding: 0 1px; }
.layout.active .fill { fill: #fff; }
</style>
